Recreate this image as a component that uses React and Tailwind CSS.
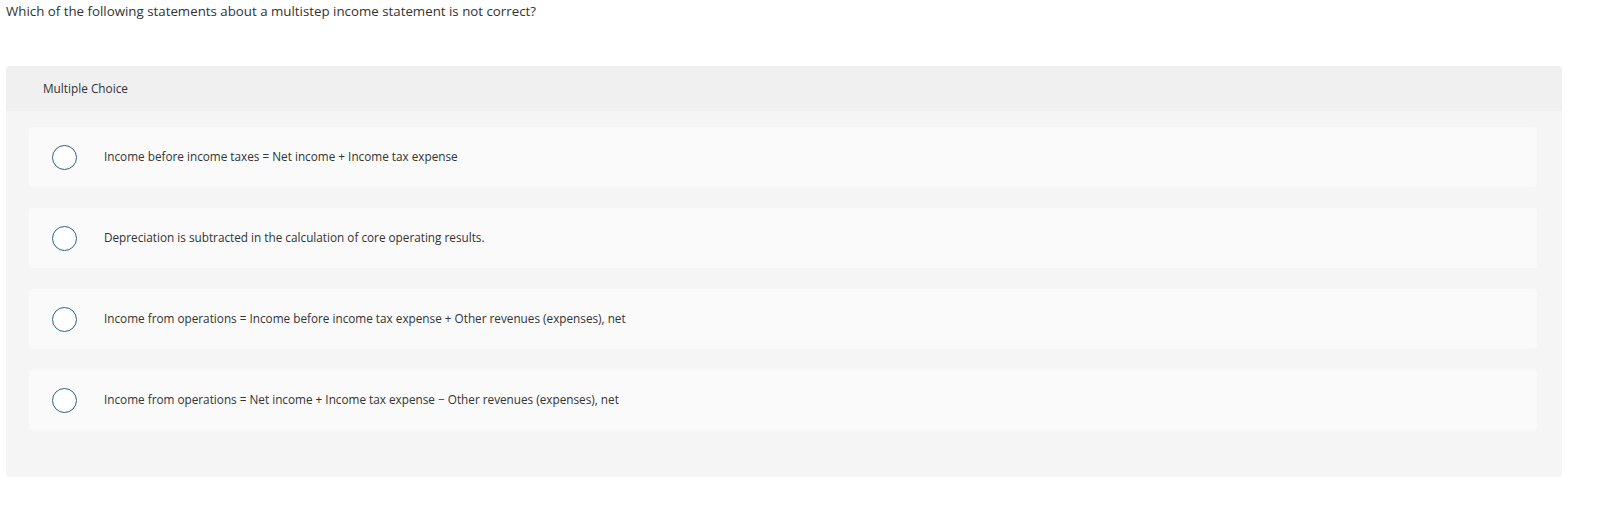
import React, { useState } from 'react';

const options = [
  'Income before income taxes = Net income + Income tax expense',
  'Depreciation is subtracted in the calculation of core operating results.',
  'Income from operations = Income before income tax expense + Other revenues (expenses), net',
  'Income from operations = Net income + Income tax expense \u2212 Other revenues (expenses), net',
];

const App = () => {
  const [selected, setSelected] = useState(null);

  return (
    <div className="min-h-[521px] bg-white text-[#333] font-['Open_Sans',sans-serif]">
      <p className="px-[6px] pt-[3px] text-[13.3px] leading-[17px]">
        Which of the following statements about a multistep income statement is not correct?
      </p>

      <div className="mt-[46px] ml-[6px] w-[1556px] rounded-[4px] bg-[#f5f5f5] overflow-hidden">
        <div className="h-[45px] flex items-center pl-[37px] bg-[#f0f0f0] text-[11.8px]">
          Multiple Choice
        </div>

        <div className="flex flex-col gap-[21px] pl-[23px] pr-[25px] pt-[16px] pb-[47px]">
          {options.map((text, i) => (
            <label
              key={i}
              onClick={() => setSelected(i)}
              className="h-[60px] flex items-center pl-[23px] rounded-[4px] bg-[#fafafa] cursor-pointer"
            >
              <span className="w-[25px] h-[25px] shrink-0 rounded-full border-[1.5px] border-[#2f5e8e] bg-white flex items-center justify-center">
                {selected === i && <span className="w-[13px] h-[13px] rounded-full bg-[#2f5e8e]" />}
              </span>
              <span className="ml-[27px] mb-[3px] text-[11.75px] leading-[16px]">{text}</span>
            </label>
          ))}
        </div>
      </div>
    </div>
  );
};

export default App;
